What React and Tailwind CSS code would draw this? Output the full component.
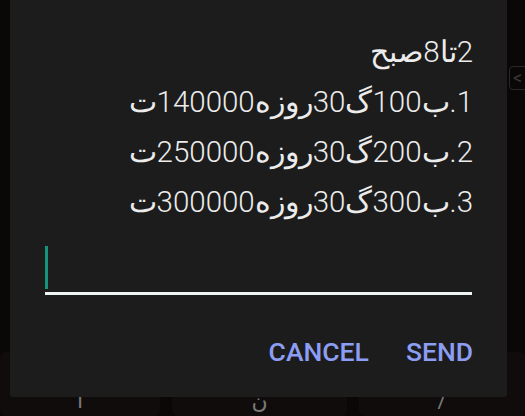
export default function App() {
  const lines = [
    '2تا8صبح',
    '1.ب100گ30روزه140000ت',
    '2.ب200گ30روزه250000ت',
    '3.ب300گ30روزه300000ت',
  ]

  return (
    <div className="relative w-[525px] h-[416px] overflow-hidden bg-[#0a0807] font-['Roboto','DejaVu_Sans',sans-serif]">
      {/* keyboard behind the dialog */}
      <div className="grid grid-cols-[160px_175px_166px] gap-x-[12px] pt-[352px] h-full">
        <div className="flex justify-center items-end pb-[4px] rounded-md bg-[#0f0c0b] text-[#7a7a7a] text-[22px] leading-none">ا</div>
        <div className="flex justify-center items-end pb-[4px] rounded-md bg-[#0f0c0b] text-[#7a7a7a] text-[22px] leading-none">ن</div>
        <div className="flex justify-center items-end pb-[4px] rounded-md bg-[#0f0c0b] text-[#7a7a7a] text-[22px] leading-none">/</div>
      </div>
      <div className="absolute right-[-4px] top-[66px] w-[20px] h-[24px] rounded border border-[#2a2826] text-[#3a3836] text-[18px] leading-[22px] pl-[3px]">
        &lt;
      </div>

      {/* dialog */}
      <div className="absolute left-[10px] top-[-12px] w-[497px] h-[409px] rounded-[3px] bg-[#1c1c1c] flex flex-col">
        <div dir="rtl" className="pt-[39px] pr-[34px] text-right text-[#ececec] text-[29.5px] font-light leading-[50px]">
          {lines.map((l) => (
            <div key={l}>{l}</div>
          ))}
        </div>

        <div className="mt-[19px] mx-[35px] relative h-[49px] border-b-[3px] border-[#eef5f2]">
          <div className="absolute left-0 top-0 w-[3px] h-[43px] bg-[#16937a]" />
        </div>

        <div className="flex justify-end gap-[37px] pr-[34px] mt-[37px] text-[26.5px] font-medium text-[#8c9ef3]">
          <span>CANCEL</span>
          <span>SEND</span>
        </div>
      </div>
    </div>
  )
}
